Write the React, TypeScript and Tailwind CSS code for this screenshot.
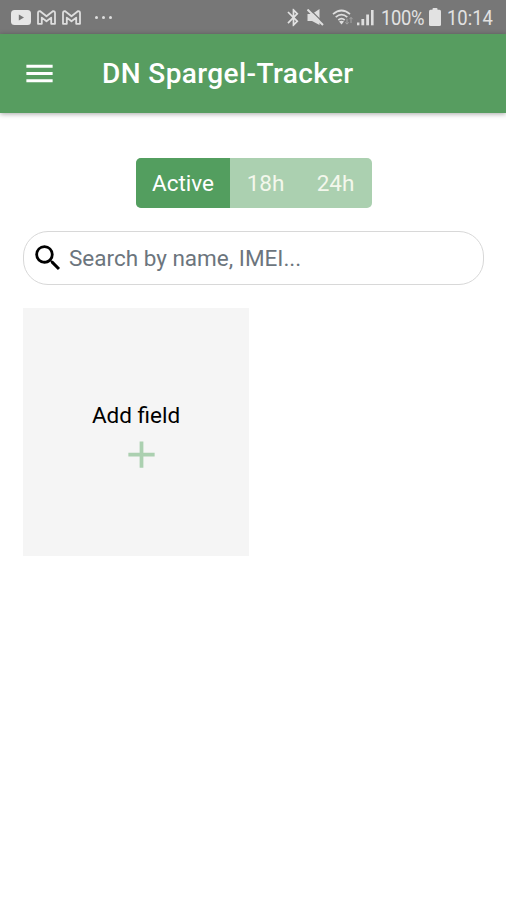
import { MdAdd, MdBluetooth, MdMenu, MdSearch } from "react-icons/md"

const YoutubeIcon = () => (
  <svg className="w-[20px] h-[15px]" viewBox="0 0 20 15">
    <rect width="20" height="15" rx="3.5" fill="#e6e6e6" />
    <path d="M7.8 4.5v6l5.2-3z" fill="#777" />
  </svg>
)

const MailIcon = () => (
  <svg className="w-[19px] h-[15px]" viewBox="0 0 19 15" fill="none">
    <path
      d="M1 13.8V3Q1 .9 3.2 1.2L9.5 6.2 15.8 1.2Q18 .9 18 3V13.8H14.2V7.6L9.5 11.3 4.8 7.6V13.8Z"
      stroke="#dedede"
      strokeWidth="1.8"
      strokeLinejoin="round"
    />
  </svg>
)

const MuteIcon = () => (
  <svg className="w-[17px] h-[17px]" viewBox="0 0 17 17">
    <path d="M.5 5h4.5L12.5 0v16L5 12H.5z" fill="#dedede" />
    <path d="M2.5 0 17 14.3" stroke="#777" strokeWidth="1.3" />
    <path d="M.5 .5 16 16" stroke="#dedede" strokeWidth="2" />
  </svg>
)

const WifiIcon = () => (
  <svg className="w-[22px] h-[17px]" viewBox="0 0 22 17" fill="none">
    <g stroke="#dedede" strokeWidth="1.7">
      <path d="M1 5.2Q9.5-2.2 18 5.2" />
      <path d="M3.7 8.2Q9.5 3 15.3 8.2" />
      <path d="M6.3 11Q9.5 8.2 12.7 11" />
    </g>
    <path d="M7 12.6Q9.5 10.8 12 12.6L9.5 15.6Z" fill="#dedede" />
    <path
      d="M15 9.8v5.2M13.4 13.4l1.6 1.8 1.6-1.8M19 14V8.5M17.4 10.2l1.6-1.8 1.6 1.8"
      stroke="#a5a5a5"
    />
  </svg>
)

const SignalIcon = () => (
  <svg className="w-[18px] h-[17px]" viewBox="0 0 18 17" fill="#dedede">
    <rect x="0" y="13.5" width="2.4" height="2.8" />
    <rect x="4.4" y="10" width="2.8" height="6.3" />
    <rect x="9.2" y="5.5" width="2.8" height="10.8" />
    <rect x="14" y="1" width="2.6" height="15.3" />
  </svg>
)

const BatteryIcon = () => (
  <svg className="w-[12px] h-[18px]" viewBox="0 0 12 18" fill="#e2e2e2">
    <rect x="3.5" width="5" height="4" rx="1" />
    <rect y="1.8" width="12" height="16.2" rx="1.5" />
  </svg>
)

const StatusBar = () => (
  <div className="h-[34px] bg-[#777777] flex items-center justify-between pl-[11px] pr-[13px] text-[#e2e2e2]">
    <div className="flex items-center gap-[6px]">
      <YoutubeIcon />
      <MailIcon />
      <MailIcon />
      <div className="flex gap-[4px] ml-[8px]">
        <span className="size-[3px] rounded-full bg-[#dedede]" />
        <span className="size-[3px] rounded-full bg-[#dedede]" />
        <span className="size-[3px] rounded-full bg-[#dedede]" />
      </div>
    </div>
    <div className="flex items-center">
      <MdBluetooth size={21} />
      <span className="w-[3px]" />
      <MuteIcon />
      <span className="w-[8px]" />
      <WifiIcon />
      <span className="w-[3px]" />
      <SignalIcon />
      <span className="w-[6px]" />
      <span className="w-[48px] text-[20px] mt-[2px]">
        <span className="block w-[51px] origin-left scale-x-[0.92] tracking-[-0.4px]">100%</span>
      </span>
      <BatteryIcon />
      <span className="ml-[6px] w-[46px] text-[20px] mt-[2px]">
        <span className="block w-[50px] origin-left scale-x-[0.92]">10:14</span>
      </span>
    </div>
  </div>
)

const Header = () => (
  <header className="h-[79px] bg-[#579d60] flex items-center pl-[22px] text-white shadow-[0_1px_5px_rgba(0,0,0,0.35)]">
    <MdMenu size={35} />
    <h1 className="ml-[45px] mt-px text-[28px] font-medium tracking-[0.4px]">DN Spargel-Tracker</h1>
  </header>
)

const FilterTabs = () => (
  <div className="mx-auto w-[236px] h-[50px] flex rounded-[5px] overflow-hidden text-[22.5px] text-white bg-[#abd0b0]">
    <button className="w-[94px] pt-[2px] pl-px bg-[#539e5f]">Active</button>
    <button className="w-[72px] pt-[2px] text-[#f3f7ec]">18h</button>
    <button className="w-[68px] pt-[2px] text-[#f3f7ec]">24h</button>
  </div>
)

const App = () => {
  return (
    <div className="min-h-screen bg-white font-[Roboto,sans-serif]">
      <StatusBar />
      <Header />
      <main className="pl-[23px] pr-[22px] pt-[45px]">
        <FilterTabs />
        <label className="mt-[23px] h-[54px] flex items-center rounded-[25px] border border-[#d8d8d8] pl-[7px]">
          <MdSearch size={34} className="text-black shrink-0" />
          <input
            type="text"
            placeholder="Search by name, IMEI..."
            className="ml-[4px] pt-[2px] flex-1 text-[22.5px] outline-none placeholder:text-[#6c757d]"
          />
        </label>
        <button className="mt-[23px] w-[226px] h-[248px] pt-[11px] bg-[#f5f5f5] flex flex-col items-center justify-center text-black">
          <span className="text-[22.5px] leading-[34px]">Add field</span>
          <MdAdd size={45} className="ml-[11px] text-[#abd0b0]" />
        </button>
      </main>
    </div>
  )
}

export default App
